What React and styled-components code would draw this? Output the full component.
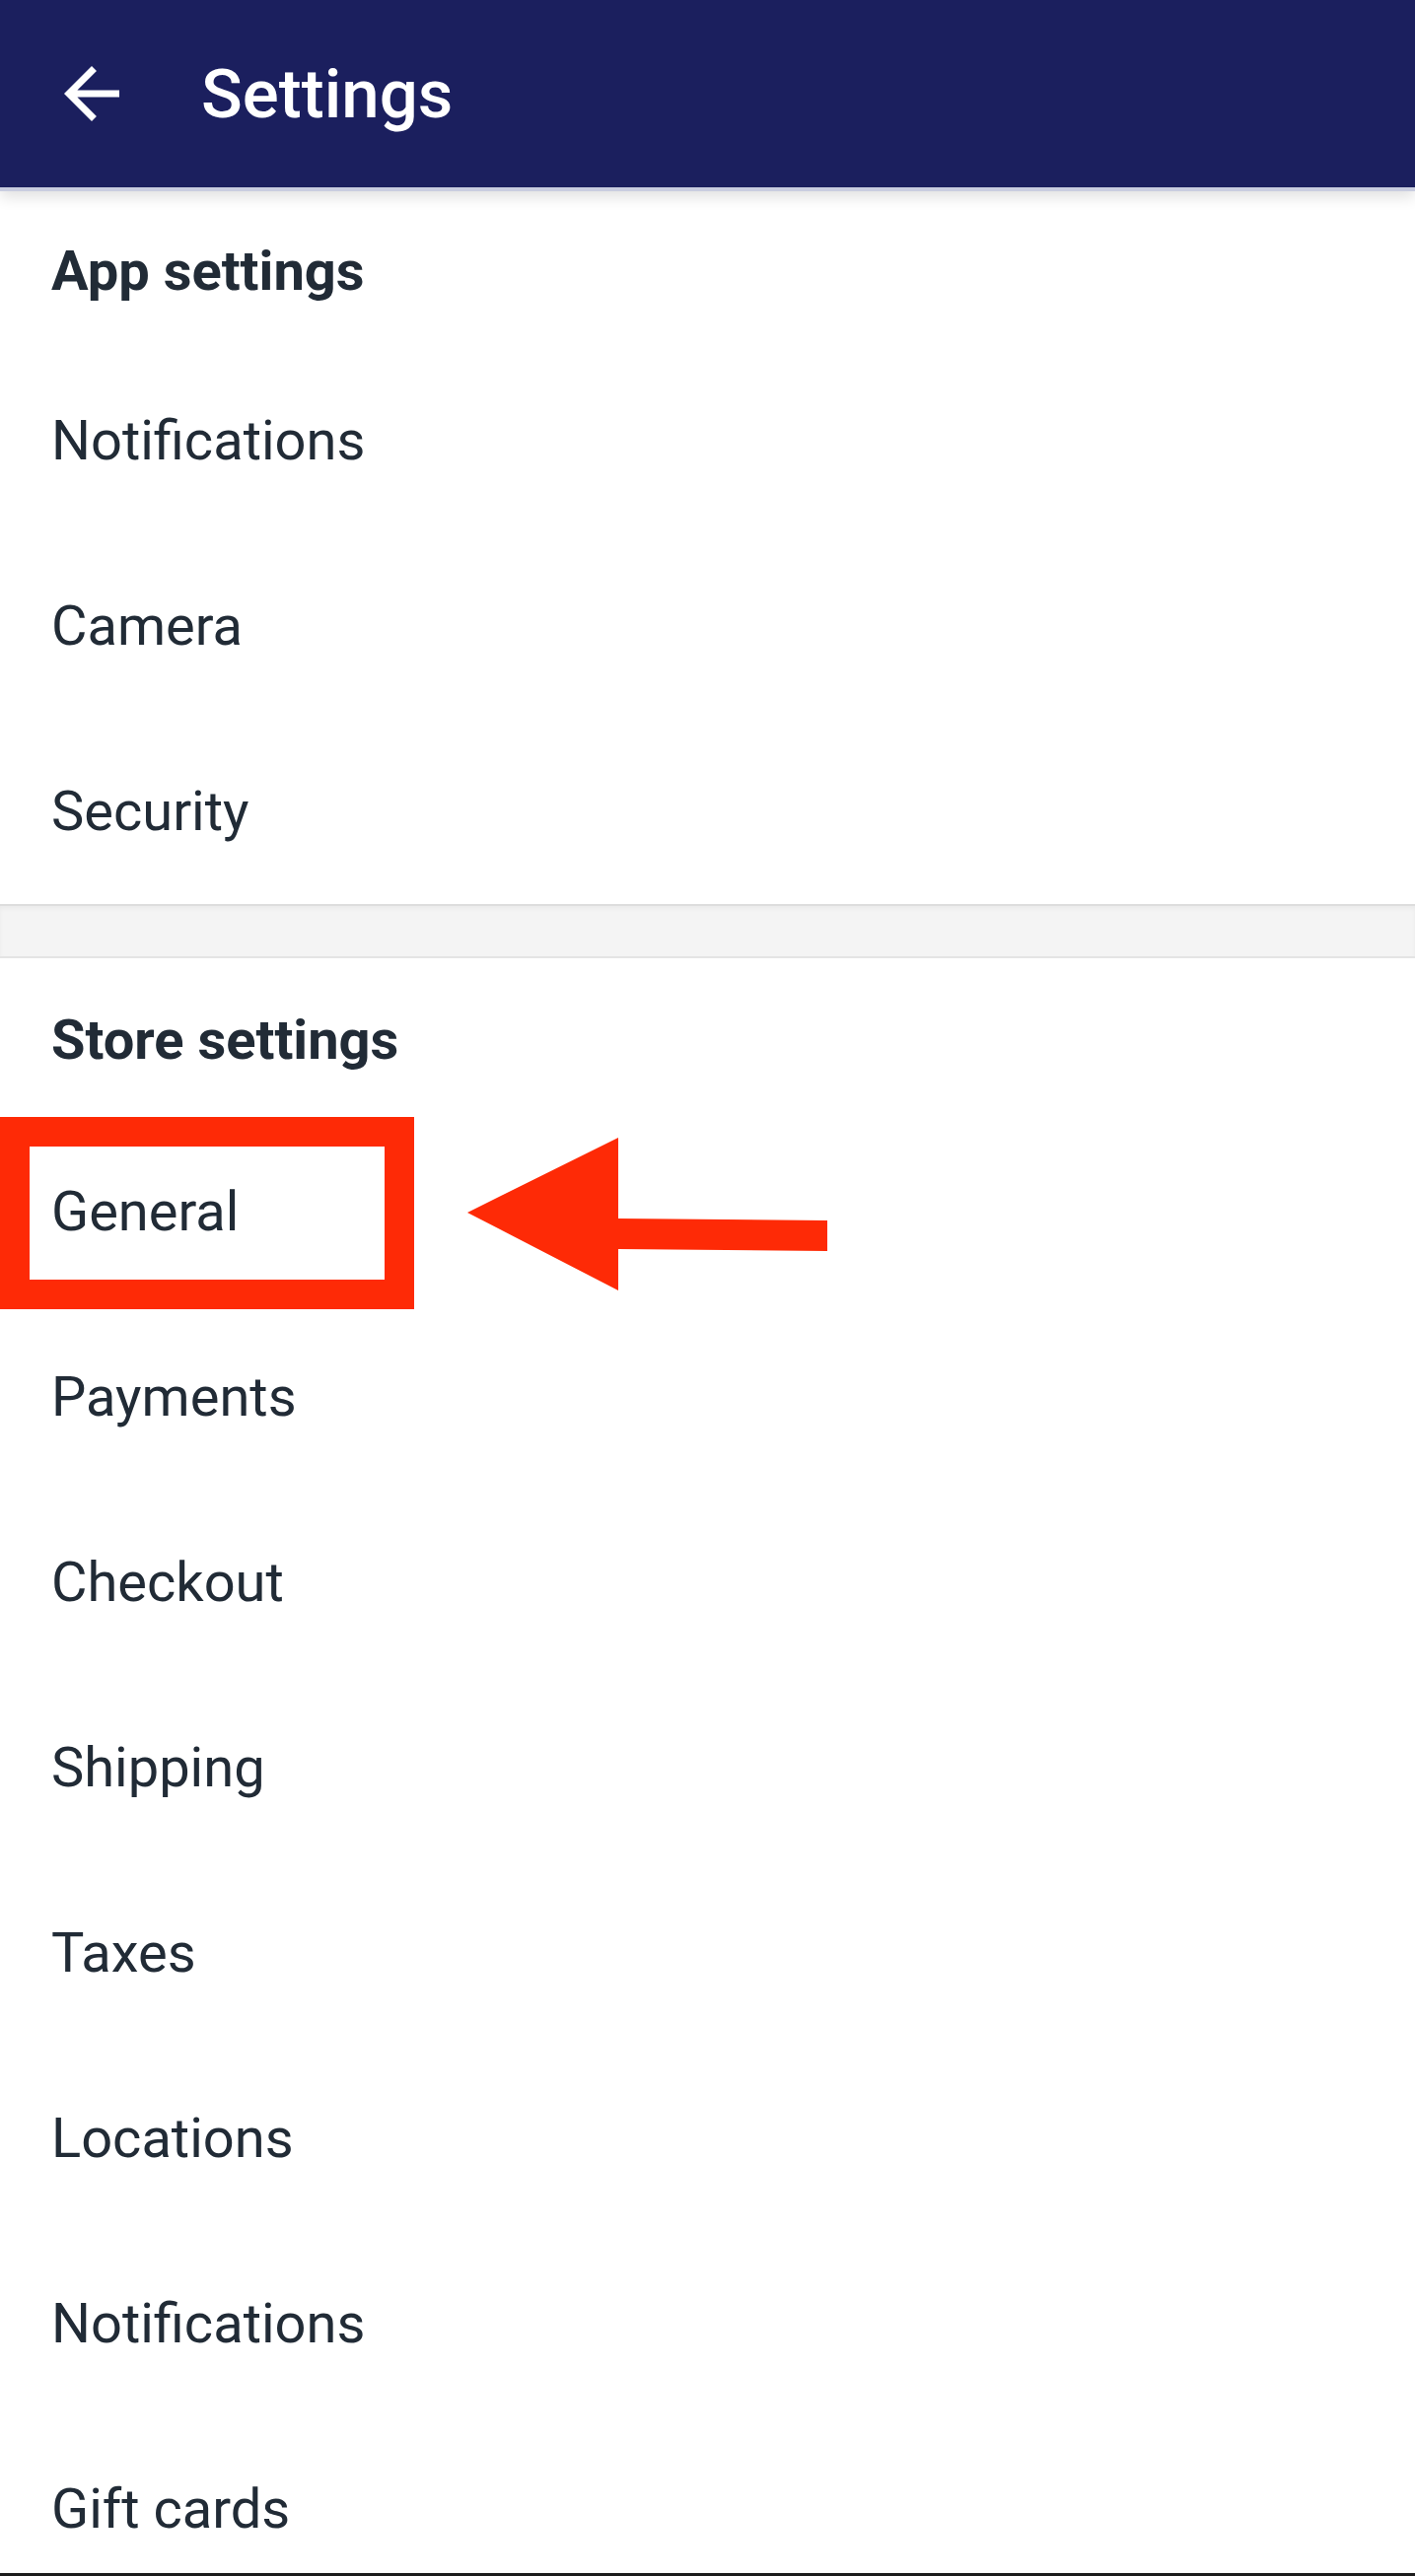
import styled, { createGlobalStyle } from 'styled-components';

const GlobalStyle = createGlobalStyle`
  html, body {
    margin: 0;
    padding: 0;
    background: #ffffff;
  }
  body {
    font-family: Roboto, "Liberation Sans", Arial, sans-serif;
    -webkit-font-smoothing: antialiased;
  }
`;

const Screen = styled.div`
  height: 2613px;
  overflow: hidden;
  background-color: #ffffff;
  border-bottom: 3px solid #1c1c1c;
  box-sizing: border-box;
  display: flex;
  flex-direction: column;
`;

const TopBar = styled.header`
  position: relative;
  z-index: 2;
  flex-shrink: 0;
  height: 190px;
  background-color: #1b1f5e;
  border-bottom: 4px solid #c9cde0;
  box-sizing: content-box;
  box-shadow: 0 6px 14px rgba(0, 0, 0, 0.12);
  display: flex;
  align-items: center;
  padding-left: 51px;
`;

const BackButton = styled.button`
  width: 84px;
  height: 84px;
  padding: 0;
  border: none;
  background: none;
  display: flex;
  align-items: center;
  justify-content: center;
  color: #ffffff;
  cursor: pointer;
`;

const Title = styled.h1`
  margin: 0 0 0 69px;
  font-size: 69px;
  font-weight: 500;
  color: #ffffff;
`;

const Section = styled.section`
  flex-shrink: 0;
  background-color: #ffffff;
`;

const SectionTitle = styled.div`
  height: ${(props) => props.$height}px;
  box-sizing: border-box;
  padding: 2px 0 0 52px;
  display: flex;
  align-items: center;
  font-size: 56px;
  font-weight: 700;
  color: #212b36;
`;

const Row = styled.div`
  position: relative;
  height: 188px;
  padding-left: 52px;
  display: flex;
  align-items: center;
  font-size: 56px;
  font-weight: 400;
  color: #212b36;
`;

const Gap = styled.div`
  flex-shrink: 0;
  height: 51px;
  background-color: #f4f4f4;
  border-top: 2px solid #dddddd;
  border-bottom: 2px solid #e4e4e4;
  box-shadow: inset 0 3px 4px rgba(0, 0, 0, 0.04);
`;

const Highlight = styled.div`
  position: absolute;
  left: 0;
  top: -2px;
  width: 420px;
  height: 195px;
  box-sizing: border-box;
  border: 30px solid #fe2a06;
  pointer-events: none;
`;

const Pointer = styled.svg`
  position: absolute;
  left: 474px;
  top: 19px;
  pointer-events: none;
`;

const BackArrow = () => (
  <svg width="84" height="84" viewBox="0 0 24 24" fill="currentColor">
    <path d="M20 11H7.83l5.59-5.59L12 4l-8 8 8 8 1.41-1.41L7.83 13H20v-2z" />
  </svg>
);

const appItems = ['Notifications', 'Camera', 'Security'];
const storeItems = [
  'General',
  'Payments',
  'Checkout',
  'Shipping',
  'Taxes',
  'Locations',
  'Notifications',
  'Gift cards',
];

const App = () => {
  return (
    <>
      <GlobalStyle />
      <Screen>
        <TopBar>
          <BackButton aria-label="Back">
            <BackArrow />
          </BackButton>
          <Title>Settings</Title>
        </TopBar>

        <Section>
          <SectionTitle $height={159}>App settings</SectionTitle>
          {appItems.map((item) => (
            <Row key={item}>{item}</Row>
          ))}
        </Section>

        <Gap />

        <Section>
          <SectionTitle $height={163}>Store settings</SectionTitle>
          {storeItems.map((item) => (
            <Row key={item}>
              {item}
              {item === 'General' && (
                <>
                  <Highlight />
                  <Pointer width="366" height="156" viewBox="0 0 366 156">
                    <polygon
                      points="0,76 153,0 153,82 365,84 365,115 153,113 153,155"
                      fill="#fe2a06"
                    />
                  </Pointer>
                </>
              )}
            </Row>
          ))}
        </Section>
      </Screen>
    </>
  );
};

export default App;
